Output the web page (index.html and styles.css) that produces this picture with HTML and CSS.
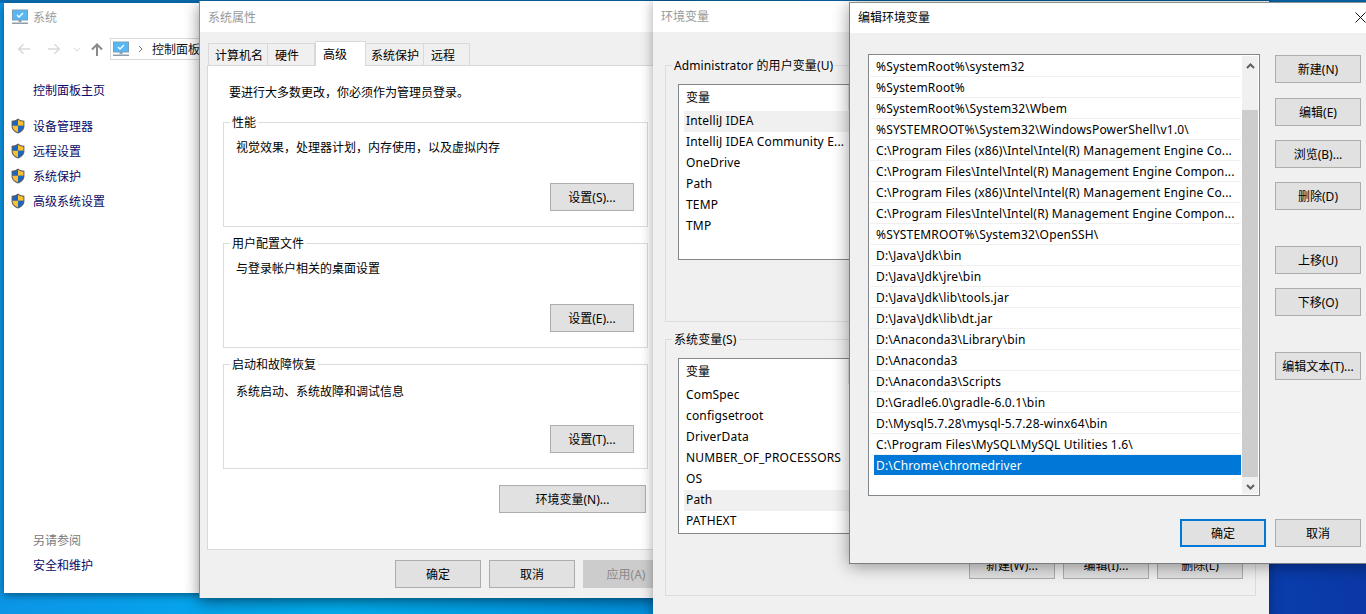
FILE: index.html
```html
<!DOCTYPE html>
<html lang="zh-CN">
<head>
<meta charset="utf-8">
<title>编辑环境变量</title>
<link rel="stylesheet" href="styles.css">
</head>
<body>
<svg class="defs" width="0" height="0" aria-hidden="true">
  <defs>
    <symbol id="monitor" viewBox="0 0 16 16">
      <rect x="0.5" y="1" width="15" height="10" fill="#55b8f4" stroke="#7d9db5" stroke-width="1"/>
      <path d="M5 6l2 2 4-4" fill="none" stroke="#fff" stroke-width="1.4"/>
      <rect x="6.5" y="11" width="3" height="2" fill="#8f9fac"/>
      <rect x="0" y="13.5" width="16" height="1.5" fill="#8d9dab"/>
    </symbol>
    <symbol id="shield" viewBox="0 0 14 16">
      <path d="M7 .5C5 2 3 2.600.6 2.800v5.400c0 3.400 2.600 5.700 6.400 7.300 3.800-1.600 6.400-3.900 6.400-7.300V2.800C11 2.600 9 2 7 .5z" fill="#5c5c5c"/>
      <path d="M7 1.700v6.100H1.600V3.700C3.500 3.500 5.300 3 7 1.700z" fill="#1a66c4"/>
      <path d="M7 1.700c1.700 1.300 3.500 1.800 5.400 2v4.100H7z" fill="#fbc02f"/>
      <path d="M1.600 7.800H7v6.600c-3.200-1.400-5.400-3.400-5.400-6.200z" fill="#fbc02f"/>
      <path d="M7 7.800h5.400v.4c0 2.800-2.200 4.800-5.400 6.200z" fill="#1a66c4"/>
    </symbol>
  </defs>
</svg>

<main class="desktop">

  <section class="win win-system">
    <header class="sys-title">
      <svg class="ico16"><use href="#monitor"/></svg>
      <span class="title-dim">系统</span>
    </header>
    <nav class="sys-nav">
      <svg class="nav-arrow" viewBox="0 0 14 12"><path d="M13 6H2M6.500 1.200 1.700 6l4.800 4.800" fill="none" stroke="#d9d9d9" stroke-width="1.500"/></svg>
      <svg class="nav-arrow nav-fwd" viewBox="0 0 14 12"><path d="M1 6h11M7.500 1.200 12.300 6l-4.800 4.800" fill="none" stroke="#d9d9d9" stroke-width="1.500"/></svg>
      <svg class="nav-drop" viewBox="0 0 8 5"><path d="M1 1l3 3 3-3" fill="none" stroke="#d9d9d9" stroke-width="1"/></svg>
      <svg class="nav-up" viewBox="0 0 12 13"><path d="M6 13V2M1 6.500 6 1.500l5 5" fill="none" stroke="#8a8a8a" stroke-width="2"/></svg>
      <div class="address">
        <svg class="ico16"><use href="#monitor"/></svg>
        <svg class="addr-chev" viewBox="0 0 5 8"><path d="M1 1l3 3-3 3" fill="none" stroke="#777" stroke-width="1"/></svg>
        <span>控制面板</span>
      </div>
    </nav>
    <div class="sys-side">
      <a class="link home">控制面板主页</a>
      <ul class="side-list">
        <li class="side-item"><svg class="shield"><use href="#shield"/></svg><a class="link">设备管理器</a></li>
        <li class="side-item"><svg class="shield"><use href="#shield"/></svg><a class="link">远程设置</a></li>
        <li class="side-item"><svg class="shield"><use href="#shield"/></svg><a class="link">系统保护</a></li>
        <li class="side-item"><svg class="shield"><use href="#shield"/></svg><a class="link">高级系统设置</a></li>
      </ul>
      <div class="see-also">
        <span class="see-label">另请参阅</span>
        <a class="link">安全和维护</a>
      </div>
    </div>
  </section>

  <section class="win win-props">
    <header class="title-bar"><span class="title-dim">系统属性</span></header>
    <div class="props-body">
      <div class="tabs">
        <span class="tab tab-a">计算机名</span>
        <span class="tab tab-b">硬件</span>
        <span class="tab tab-on">高级</span>
        <span class="tab tab-d">系统保护</span>
        <span class="tab tab-e">远程</span>
      </div>
      <div class="tab-panel">
        <p class="notice">要进行大多数更改，你必须作为管理员登录。</p>
        <div class="group">
          <span class="legend">性能</span>
          <p class="group-text">视觉效果，处理器计划，内存使用，以及虚拟内存</p>
          <button class="btn btn-set">设置(S)...</button>
        </div>
        <div class="group">
          <span class="legend">用户配置文件</span>
          <p class="group-text">与登录帐户相关的桌面设置</p>
          <button class="btn btn-set">设置(E)...</button>
        </div>
        <div class="group">
          <span class="legend">启动和故障恢复</span>
          <p class="group-text group-text-low">系统启动、系统故障和调试信息</p>
          <button class="btn btn-set btn-set-low">设置(T)...</button>
        </div>
        <button class="btn btn-env">环境变量(N)...</button>
      </div>
      <div class="foot props-foot">
        <button class="btn">确定</button>
        <button class="btn">取消</button>
        <button class="btn btn-off">应用(A)</button>
      </div>
    </div>
  </section>

  <section class="win win-env">
    <header class="title-bar title-env"><span class="title-dim">环境变量</span></header>
    <div class="env-body">
      <div class="group env-group">
        <span class="legend env-legend">Administrator 的用户变量(U)</span>
        <div class="var-list">
          <div class="var-head"><span class="var-col">变量</span></div>
          <div class="var-row var-sel">IntelliJ IDEA</div>
          <div class="var-row">IntelliJ IDEA Community E...</div>
          <div class="var-row">OneDrive</div>
          <div class="var-row">Path</div>
          <div class="var-row">TEMP</div>
          <div class="var-row">TMP</div>
        </div>
      </div>
      <div class="group env-group">
        <span class="legend env-legend">系统变量(S)</span>
        <div class="var-list">
          <div class="var-head"><span class="var-col">变量</span></div>
          <div class="var-row">ComSpec</div>
          <div class="var-row">configsetroot</div>
          <div class="var-row">DriverData</div>
          <div class="var-row">NUMBER_OF_PROCESSORS</div>
          <div class="var-row">OS</div>
          <div class="var-row var-sel">Path</div>
          <div class="var-row">PATHEXT</div>
        </div>
        <div class="foot env-foot">
          <button class="btn">新建(W)...</button>
          <button class="btn">编辑(I)...</button>
          <button class="btn">删除(L)</button>
        </div>
      </div>
    </div>
  </section>

  <section class="win win-edit">
    <header class="edit-title">
      <span>编辑环境变量</span>
      <svg class="close" viewBox="0 0 11 11"><path d="M.5.500l10 10M10.500.500l-10 10" stroke="#111" stroke-width="1" fill="none"/></svg>
    </header>
    <div class="edit-body">
      <div class="edit-main">
        <div class="path-box">
          <ul class="path-list">
            <li class="path-row">%SystemRoot%\system32</li>
            <li class="path-row">%SystemRoot%</li>
            <li class="path-row">%SystemRoot%\System32\Wbem</li>
            <li class="path-row">%SYSTEMROOT%\System32\WindowsPowerShell\v1.0\</li>
            <li class="path-row">C:\Program Files (x86)\Intel\Intel(R) Management Engine Co...</li>
            <li class="path-row">C:\Program Files\Intel\Intel(R) Management Engine Compon...</li>
            <li class="path-row">C:\Program Files (x86)\Intel\Intel(R) Management Engine Co...</li>
            <li class="path-row">C:\Program Files\Intel\Intel(R) Management Engine Compon...</li>
            <li class="path-row">%SYSTEMROOT%\System32\OpenSSH\</li>
            <li class="path-row">D:\Java\Jdk\bin</li>
            <li class="path-row">D:\Java\Jdk\jre\bin</li>
            <li class="path-row">D:\Java\Jdk\lib\tools.jar</li>
            <li class="path-row">D:\Java\Jdk\lib\dt.jar</li>
            <li class="path-row">D:\Anaconda3\Library\bin</li>
            <li class="path-row">D:\Anaconda3</li>
            <li class="path-row">D:\Anaconda3\Scripts</li>
            <li class="path-row">D:\Gradle6.0\gradle-6.0.1\bin</li>
            <li class="path-row">D:\Mysql5.7.28\mysql-5.7.28-winx64\bin</li>
            <li class="path-row">C:\Program Files\MySQL\MySQL Utilities 1.6\</li>
            <li class="path-row path-sel">D:\Chrome\chromedriver</li>
          </ul>
          <div class="scrollbar">
            <svg class="sb-arrow" viewBox="0 0 9 6"><path d="M1 5l3.500-3.500L8 5" fill="none" stroke="#606060" stroke-width="2"/></svg>
            <div class="sb-track"><div class="sb-thumb"></div></div>
            <svg class="sb-arrow" viewBox="0 0 9 6"><path d="M1 1l3.500 3.500L8 1" fill="none" stroke="#606060" stroke-width="2"/></svg>
          </div>
        </div>
        <div class="edit-side">
          <div class="side-btns">
            <button class="btn btn-first">新建(N)</button>
            <button class="btn">编辑(E)</button>
            <button class="btn">浏览(B)...</button>
            <button class="btn">删除(D)</button>
          </div>
          <div class="side-btns">
            <button class="btn">上移(U)</button>
            <button class="btn">下移(O)</button>
          </div>
          <button class="btn">编辑文本(T)...</button>
        </div>
      </div>
      <div class="foot edit-foot">
        <button class="btn btn-primary">确定</button>
        <button class="btn">取消</button>
      </div>
    </div>
  </section>
</main>
</body>
</html>
```
FILE: styles.css
```css
* { box-sizing: border-box; }
html, body { margin: 0; height: 100%; overflow: hidden; }
body {
  font-family: "Noto Sans", "Noto Sans CJK SC", sans-serif;
  font-size: 12px;
  color: #000;
}
p, ul { margin: 0; padding: 0; list-style: none; }
.defs { position: absolute; }

.desktop {
  position: relative;
  width: 1366px;
  height: 614px;
  overflow: hidden;
  background:
    linear-gradient(180deg, #0a6fb4 0, #0a6fb4 3px, transparent 3px) top left / 100% 3px no-repeat,
    linear-gradient(90deg, #0c95e6 0, #01aef0 25%, #0090e0 48%, #0a3fae 90%, #0a38a6 100%);
}
.win { position: absolute; display: flex; flex-direction: column; background: #fff; }

.btn {
  height: 28px;
  width: 86px;
  padding: 0;
  border: 1px solid #adadad;
  background: #e1e1e1;
  font: inherit;
  color: #000;
  flex: none;
}
.title-dim { color: #999; }

/* System window */
.win-system { left: 4px; top: 3px; width: 800px; height: 590px; box-shadow: 0 2px 8px rgba(0,0,0,.45); }
.sys-title { display: flex; align-items: center; height: 26px; padding: 0 0 0 8px; gap: 5px; margin-top: 1px; margin-bottom: 2px; }
.ico16 { width: 16px; height: 16px; flex: none; }
.sys-nav { display: flex; align-items: center; height: 30px; padding-left: 13px; margin-top: 2px; }
.nav-arrow { width: 14px; height: 12px; }
.nav-fwd { margin-left: 16px; }
.nav-drop { width: 8px; height: 5px; margin-left: 12px; }
.nav-up { width: 12px; height: 13px; margin-left: 10px; }
.address { display: flex; align-items: center; height: 22px; width: 300px; margin-left: 7px; border: 1px solid #d9d9d9; padding-left: 2px; color: #111; }
.addr-chev { width: 5px; height: 8px; margin: 0 9px 0 9px; }
.sys-side { display: flex; flex-direction: column; padding-left: 7px; }
.link { color: #0a0a66; }
.home { margin: 18px 0 0 22px; line-height: 18px; }
.side-list { margin-top: 13px; }
.side-item { display: flex; align-items: center; height: 25px; gap: 8px; }
.shield { width: 14px; height: 16px; flex: none; }
.see-also { display: flex; flex-direction: column; gap: 7px; margin: 319px 0 0 22px; line-height: 18px; }
.see-label { color: #7a7a7a; }

/* System properties */
.win-props { left: 199px; top: 1px; width: 486px; height: 597px; border-left: 1px solid #8d9094; box-shadow: 0 4px 14px rgba(0,0,0,.45); background: #f0f0f0; }
.title-bar { display: flex; align-items: center; flex: none; height: 31px; background: #fff; padding: 0 0 0 8px; }
.props-body { display: flex; flex-direction: column; flex: 1; padding: 9px 0 0 7px; }
.tabs { display: flex; align-items: flex-end; height: 25px; padding-left: 1px; position: relative; z-index: 1; margin-bottom: -1px; }
.tab { height: 23px; display: flex; align-items: center; border: 1px solid #d9d9d9; border-left-width: 0; background: #f0f0f0; }
.tab-a { width: 60px; padding-left: 6px; border-left-width: 1px; }
.tab-b { width: 47px; padding-left: 7px; }
.tab-on { width: 51px; height: 25px; padding-left: 7px; background: #fff; border-left-width: 1px; border-bottom: 0; }
.tab-d { width: 58px; padding-left: 5px; }
.tab-e { width: 46px; padding-left: 7px; }
.tab-panel { display: flex; flex-direction: column; width: 470px; height: 485px; background: #fff; border: 1px solid #d9d9d9; padding: 18px 0 0 15px; }
.notice { line-height: 18px; margin-left: 6px; }
.group { position: relative; border: 1px solid #dcdcdc; }
.tab-panel .group { width: 425px; height: 105px; margin-top: 16px; padding: 16px 13px 0 12px; display: flex; flex-direction: column; }
.tab-panel .group:first-of-type { margin-top: 20px; }
.legend { position: absolute; left: 6px; top: -8px; background: #fff; padding: 0 2px; line-height: 16px; }
.group-text { line-height: 18px; }
.group-text-low { margin-top: 2px; }
.btn-set { width: 84px; align-self: flex-end; margin: 26px 0 0 0; }
.btn-set-low { margin-top: 24px; }
.btn-env { width: 147px; align-self: flex-start; margin: 16px 0 0 276px; }
.foot { display: flex; gap: 8px; }
.props-foot { padding: 10px 0 0 188px; }
.btn-off { background: #cccccc; border-color: #cccccc; color: #8a8a8a; }

/* Environment variables */
.win-env { left: 653px; top: 1px; width: 616px; height: 640px; background: #f0f0f0; box-shadow: 0 0 12px rgba(0,0,0,.35); }
.title-env { padding-bottom: 2px; }
.env-body { display: flex; flex-direction: column; gap: 17px; padding: 33px 0 0 12px; }
.env-group { width: 591px; height: 257px; padding: 18px 0 0 12px; }
.env-legend { background: #f0f0f0; top: -8px; letter-spacing: .1px; }
.var-list { display: flex; flex-direction: column; width: 566px; height: 176px; background: #fff; border: 1px solid #82878c; }
.var-head { height: 26px; padding: 0 0 0 7px; flex: none; display: flex; }
.var-col { width: 163px; height: 25px; padding-top: 5px; line-height: 16px; border-right: 1px solid #e5e5e5; }
.var-row { height: 21px; line-height: 20px; margin-left: 5px; padding-left: 2px; flex: none; letter-spacing: .16px; }
.var-sel { background: #f0f0f0; }
.env-foot { justify-content: flex-end; padding: 17px 12px 0 0; }

/* Edit window */
.win-edit { left: 849px; top: 2px; width: 541px; height: 562px; background: #f0f0f0; border: 1px solid #7b7f85; border-top-color: #8d9094; box-shadow: 0 2px 16px rgba(0,0,0,.4); }
.edit-title { display: flex; align-items: center; height: 30px; background: #fff; padding: 0 22px 2px 8px; flex: none; position: relative; }
.close { position: absolute; left: 505px; top: 9px; width: 11px; height: 11px; }
.edit-body { display: flex; flex-direction: column; padding: 21px 0 0 18px; }
.edit-main { display: flex; gap: 15px; }
.path-box { display: flex; width: 392px; height: 442px; background: #fff; border: 1px solid #82878c; padding: 1px; flex: none; }
.path-list { flex: 1; min-width: 0; }
.path-row { height: 21px; line-height: 22px; padding-left: 6px; border-bottom: 1px solid #f0f0f0; white-space: nowrap; overflow: hidden; letter-spacing: .16px; }
.path-sel { background: #0078d7; color: #fff; height: 20px; border-bottom: 0; margin-left: 4px; padding-left: 2px; }
.scrollbar { display: flex; flex-direction: column; width: 16px; background: #f0f0f0; margin-left: 1px; }
.sb-arrow { width: 9px; height: 6px; margin: 7px auto; flex: none; }
.sb-track { flex: 1; padding: 34px 0 0 0; }
.sb-thumb { height: 367px; background: #cdcdcd; }
.edit-side { display: flex; flex-direction: column; gap: 36px; padding-top: 1px; }
.side-btns { display: flex; flex-direction: column; gap: 14px; }
.btn-first { margin-bottom: 1px; }
.edit-foot { padding: 23px 0 0 312px; gap: 9px; }
.btn-primary { border: 2px solid #0078d7; }
```
